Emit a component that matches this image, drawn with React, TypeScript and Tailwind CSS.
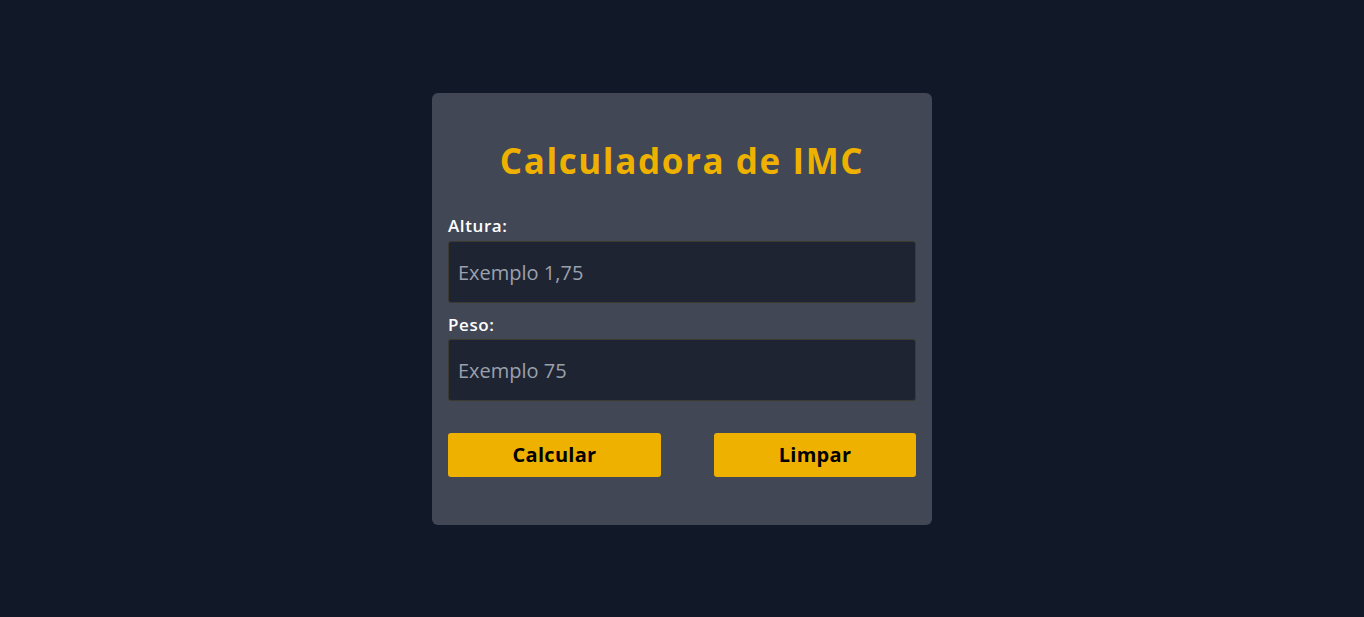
import React, { useState } from 'react';

const App = () => {
  const [altura, setAltura] = useState('');
  const [peso, setPeso] = useState('');

  const limpar = () => {
    setAltura('');
    setPeso('');
  };

  return (
    <div className="min-h-screen bg-[#111827] flex justify-center pt-[93px] font-['Open_Sans',sans-serif]">
      <div className="w-[500px] h-[432px] bg-[#424756] rounded-md px-4 pt-[44px]">
        <h1 className="text-center text-[35px] leading-[48px] font-bold text-[#efb100] tracking-[1.6px]">
          Calculadora de IMC
        </h1>
        <form className="mt-[30px]" onSubmit={(e) => e.preventDefault()}>
          <label className="block text-[17px] leading-[22px] font-semibold text-white tracking-[0.6px] mb-[4px]">
            Altura:
          </label>
          <input
            value={altura}
            onChange={(e) => setAltura(e.target.value)}
            placeholder="Exemplo 1,75"
            className="w-full h-[62px] bg-[#1f2433] border border-[#3d3a30] rounded-[3px] px-[9px] text-[20px] text-white placeholder:text-[#9aa0ac] outline-none"
          />
          <label className="block text-[17px] leading-[22px] font-semibold text-white tracking-[0.6px] mt-[11px] mb-[3px]">
            Peso:
          </label>
          <input
            value={peso}
            onChange={(e) => setPeso(e.target.value)}
            placeholder="Exemplo 75"
            className="w-full h-[62px] bg-[#1f2433] border border-[#3d3a30] rounded-[3px] px-[9px] text-[20px] text-white placeholder:text-[#9aa0ac] outline-none"
          />
          <div className="flex justify-between mt-[32px]">
            <button className="h-[44px] w-[213px] bg-[#efb100] rounded-[3px] text-[20px] font-bold text-black tracking-[0.3px]">
              Calcular
            </button>
            <button
              type="button"
              onClick={limpar}
              className="h-[44px] w-[202px] bg-[#efb100] rounded-[3px] text-[20px] font-bold text-black tracking-[0.3px]"
            >
              Limpar
            </button>
          </div>
        </form>
      </div>
    </div>
  );
};

export default App;
